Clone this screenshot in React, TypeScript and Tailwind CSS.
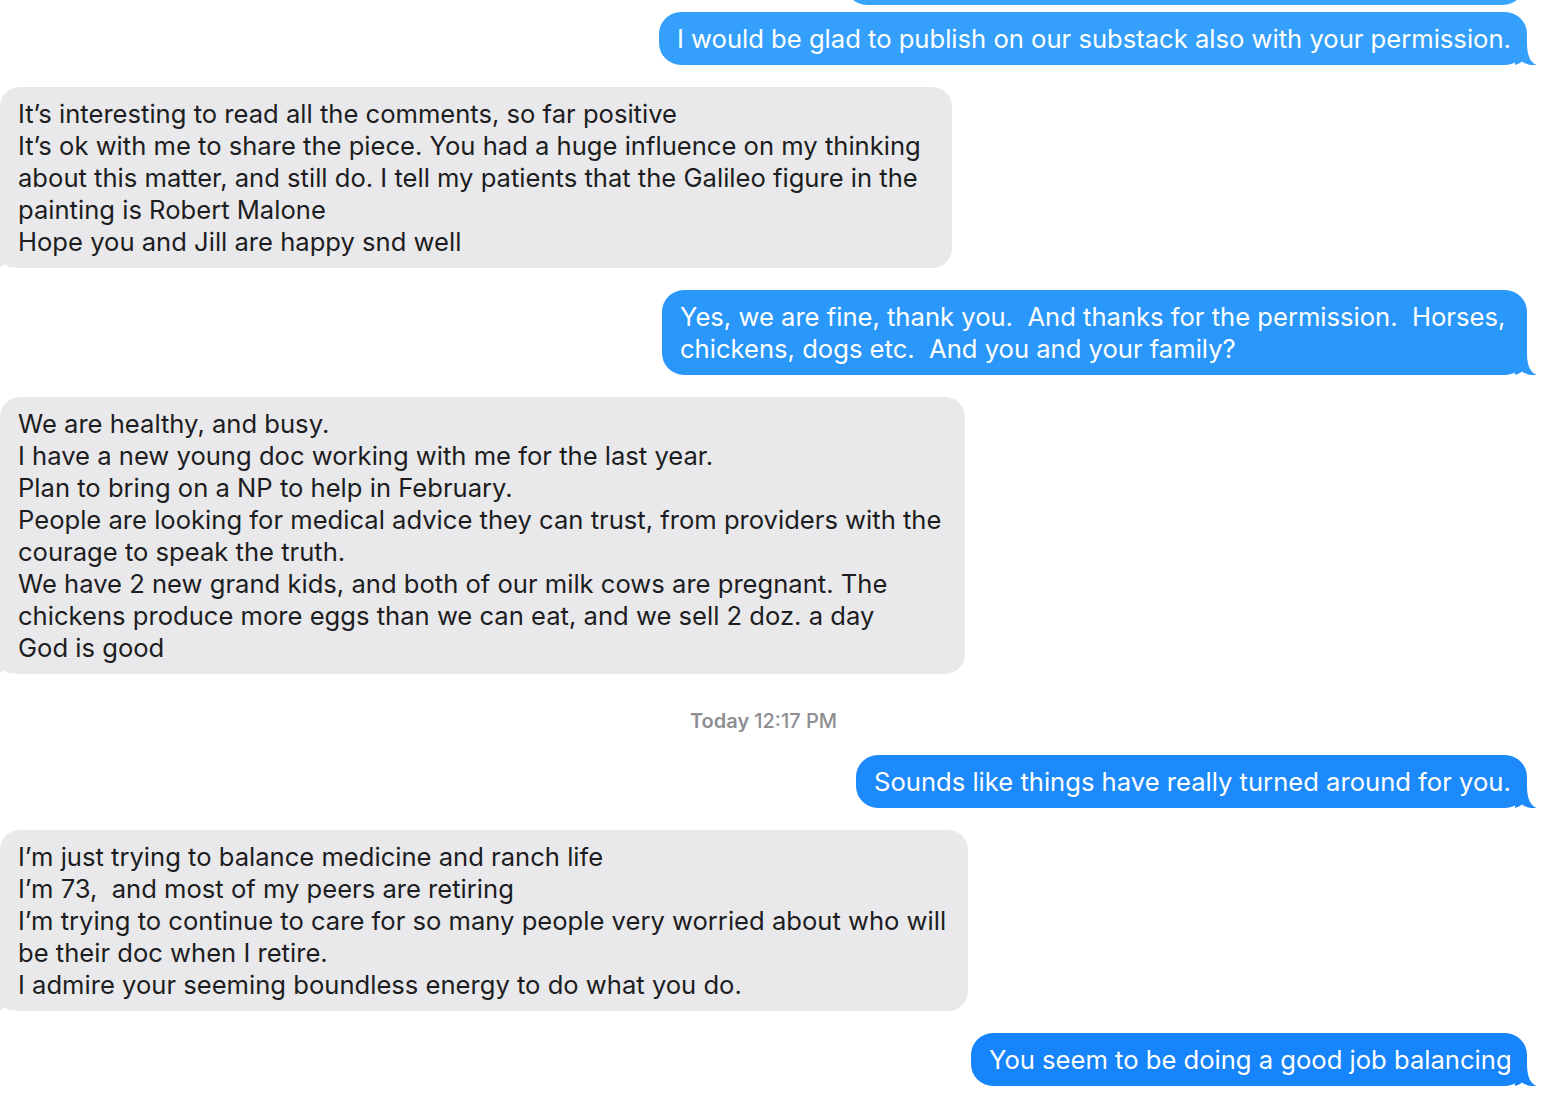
import type { ReactNode } from 'react'

const FONT = { fontFamily: 'Inter, "Noto Sans", "Liberation Sans", sans-serif' }

function SentTail({ color }: { color: string }) {
  return (
    <svg
      className="absolute bottom-0 right-[-10px] h-[22px] w-[22px]"
      viewBox="0 0 22 22"
      fill={color}
    >
      <path d="M0 0 H12 C12 12 15 19 21.5 22 C15.5 22.6 10.5 21 7 18.6 C4.5 20.4 2.5 21.4 0 22 Z" />
    </svg>
  )
}

function ReceivedTail() {
  return (
    <svg
      className="absolute bottom-0 left-[-10px] h-[22px] w-[22px] -scale-x-100"
      viewBox="0 0 22 22"
      fill="#e9e9eb"
    >
      <path d="M0 0 H12 C12 12 15 19 21.5 22 C15.5 22.6 10.5 21 7 18.6 C4.5 20.4 2.5 21.4 0 22 Z" />
    </svg>
  )
}

function Sent({
  lines,
  width,
  color,
}: {
  lines: string[]
  width: string
  color: string
}) {
  return (
    <div className="flex justify-end pr-[17px]">
      <div
        className={`relative rounded-[22px] pl-[18px] pr-[14px] pt-[11px] pb-[10px] text-white ${width}`}
        style={{ backgroundColor: color }}
      >
        {lines.map((l, i) => (
          <div key={i} className="whitespace-pre">
            {l}
          </div>
        ))}
        <SentTail color={color} />
      </div>
    </div>
  )
}

function Received({ lines, width }: { lines: string[]; width: string }) {
  return (
    <div className="flex justify-start">
      <div className={`relative rounded-[20px] bg-[#e9e9eb] pl-[18px] pr-[14px] pt-[11px] pb-[10px] text-[#1d1d1f] ${width}`}>
        {lines.map((l, i) => (
          <div key={i} className="whitespace-pre">
            {l}
          </div>
        ))}
        <ReceivedTail />
      </div>
    </div>
  )
}

function Stamp({ children }: { children: ReactNode }) {
  return (
    <div className="flex justify-center pr-[17px] pt-[35px] pb-[21px] text-[20px] leading-[25px] text-[#8e8e93]">
      {children}
    </div>
  )
}

export default function App() {
  return (
    <div
      className="h-[1102px] w-[1544px] overflow-hidden bg-white text-[25.6px] leading-[32px] antialiased"
      style={FONT}
    >
      <div className="-mt-[48px] flex flex-col">
        {/* previous message, scrolled mostly out of view */}
        <div className="flex justify-end pr-[19px]">
          <div className="h-[53px] w-[680px] rounded-[22px] bg-[#38a4fc]" />
        </div>
        <div className="h-[7px]" />
        <Sent
          lines={['I would be glad to publish on our substack also with your permission.']}
          width="w-[868px]"
          color="#34a0fc"
        />
        <div className="h-[22px]" />
        <Received
          width="w-[952px]"
          lines={[
            'It’s interesting to read all the comments, so far positive',
            'It’s ok with me to share the piece. You had a huge influence on my thinking',
            'about this matter, and still do. I tell my patients that the Galileo figure in the',
            'painting is Robert Malone',
            'Hope you and Jill are happy snd well',
          ]}
        />
        <div className="h-[22px]" />
        <Sent
          width="w-[865px]"
          color="#2a97fb"
          lines={[
            'Yes, we are fine, thank you.  And thanks for the permission.  Horses,',
            'chickens, dogs etc.  And you and your family?',
          ]}
        />
        <div className="h-[22px]" />
        <Received
          width="w-[965px]"
          lines={[
            'We are healthy, and busy.',
            'I have a new young doc working with me for the last year.',
            'Plan to bring on a NP to help in February.',
            'People are looking for medical advice they can trust, from providers with the',
            'courage to speak the truth.',
            'We have 2 new grand kids, and both of our milk cows are pregnant. The',
            'chickens produce more eggs than we can eat, and we sell 2 doz. a day',
            'God is good',
          ]}
        />
        <Stamp>
          <span className="font-semibold">Today</span>
          <span className="ml-[5px] font-medium">12:17 PM</span>
        </Stamp>
        <Sent
          width="w-[671px]"
          color="#1c8afb"
          lines={['Sounds like things have really turned around for you.']}
        />
        <div className="h-[22px]" />
        <Received
          width="w-[968px]"
          lines={[
            'I’m just trying to balance medicine and ranch life',
            'I’m 73,  and most of my peers are retiring',
            'I’m trying to continue to care for so many people very worried about who will',
            'be their doc when I retire.',
            'I admire your seeming boundless energy to do what you do.',
          ]}
        />
        <div className="h-[22px]" />
        <Sent
          width="w-[556px]"
          color="#1684fb"
          lines={['You seem to be doing a good job balancing']}
        />
      </div>
    </div>
  )
}
